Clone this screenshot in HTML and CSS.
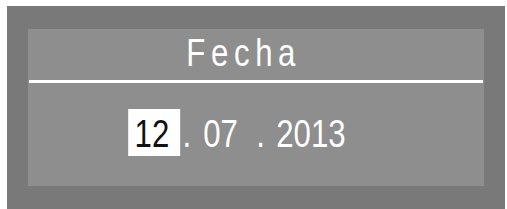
FILE: index.html
```html
<!DOCTYPE html>
<html lang="es">
  <head>
    <meta charset="UTF-8" />
    <meta name="viewport" content="width=device-width, initial-scale=1.0" />
    <title>Fecha</title>
    <link rel="stylesheet" href="styles.css">
  </head>
  <body>
    <div class="device">
      <div class="panel">
        <div class="title">
          <span class="title-text">Fecha</span>
        </div>
        <div class="rule"></div>
        <div class="value">
          <div class="date-row">
            <span class="field selected">12</span>
            <span class="sep first">.</span>
            <span class="field month">07</span>
            <span class="sep">.</span>
            <span class="field year">2013</span>
          </div>
        </div>
      </div>
    </div>
  </body>
</html>
```

FILE: styles.css
```css
*,
*::before,
*::after {
  box-sizing: border-box;
}
:root {
  --outer: #797979;
  --panel: #8e8e8e;
  --white: #fff;
}
body {
  margin: 0;
  background: var(--white);
  font-family: "Liberation Sans", Arial, sans-serif;
}

.device {
  margin: 6px 2px 0 7px;
  height: 203px;
  padding: 23px 21px 22px 21px;
  background: var(--outer);
}

.panel {
  height: 157px;
  background: var(--panel);
  display: flex;
  flex-direction: column;
}

.title {
  height: 51px;
  display: flex;
  align-items: center;
  justify-content: center;
  padding: 0 24px 4px 0;
}

.title-text {
  display: inline-block;
  font-size: 39px;
  line-height: 1;
  letter-spacing: 7px;
  color: var(--white);
  transform: scaleX(0.8);
}

.rule {
  height: 3px;
  margin: 0 1px;
  background: var(--white);
}

.value {
  flex: 1;
  display: flex;
  align-items: center;
  justify-content: center;
  padding: 0 38px 5px 0;
}

/* the display font is narrow, so squeeze the whole row */
.date-row {
  display: flex;
  align-items: baseline;
  font-size: 39px;
  line-height: 1;
  color: var(--white);
  transform: scaleX(0.8);
}

.field.selected {
  width: 65px;
  padding: 5px 0 3px 8px;
  background: var(--white);
  color: #111;
}

.sep {
  margin-left: 23px;
}

.sep.first {
  margin-left: 3px;
}

.month {
  margin-left: 15px;
}

.year {
  margin-left: 14px;
}
```
